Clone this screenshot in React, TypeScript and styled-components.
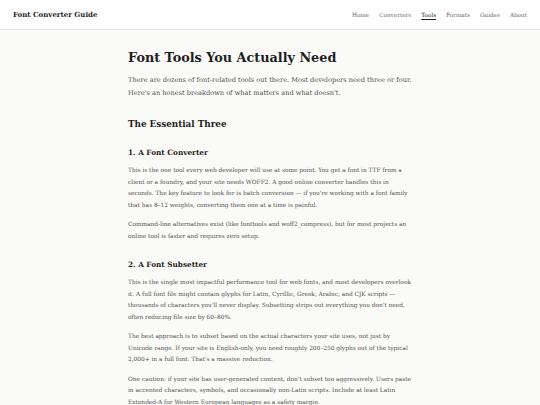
import { createGlobalStyle, styled } from "styled-components";

const GlobalStyle = createGlobalStyle`
    * { box-sizing: border-box; }
    body {
        margin: 0;
        background: #fafaf8;
        font-family: "DejaVu Serif", "Liberation Serif", serif;
        color: #555;
    }
`;

const TopBar = styled.header`
    height: 30px;
    padding: 0 13px;
    display: flex;
    align-items: center;
    justify-content: space-between;
    background: #ffffff;
    border-bottom: 1px solid #e8e8e6;
`;

const Brand = styled.div`
    font-size: 7px;
    font-weight: 700;
    color: #1e1e1e;
`;

const NavList = styled.nav`
    display: flex;
    gap: 10px;
`;

const NavLink = styled.a<{ $active?: boolean }>`
    font-size: 5.7px;
    color: ${(p) => (p.$active ? "#222" : "#666")};
    text-decoration: ${(p) => (p.$active ? "underline" : "none")};
    text-underline-offset: 1.5px;
`;

const Main = styled.main`
    width: 284px;
    margin: 0 auto;
    padding: 20px 0 30px;
`;

const Title = styled.h1`
    margin: 0 0 8px;
    font-size: 12.8px;
    line-height: 16px;
    font-weight: 700;
    color: #1e1e1e;
`;

const Lead = styled.p`
    margin: 0;
    font-size: 6.6px;
    line-height: 13px;
    color: #505050;
`;

const SectionTitle = styled.h2`
    margin: 19px 0 0;
    font-size: 8.8px;
    line-height: 11.4px;
    font-weight: 700;
    color: #1e1e1e;
`;

const ToolTitle = styled.h3`
    margin: 18px 0 7px;
    font-size: 7.3px;
    line-height: 10px;
    font-weight: 700;
    color: #1e1e1e;
`;

const Body = styled.p`
    margin: 0 0 8px;
    font-size: 5.85px;
    line-height: 11.5px;
    color: #4f4f4f;
`;

const navItems = ["Home", "Converters", "Tools", "Formats", "Guides", "About"];

export default function App() {
    return (
        <>
            <GlobalStyle />
            <TopBar>
                <Brand>Font Converter Guide</Brand>
                <NavList>
                    {navItems.map((item) => (
                        <NavLink key={item} $active={item === "Tools"}>
                            {item}
                        </NavLink>
                    ))}
                </NavList>
            </TopBar>
            <Main>
                <Title>Font Tools You Actually Need</Title>
                <Lead>
                    There are dozens of font-related tools out there. Most developers need three or four.
                    Here's an honest breakdown of what matters and what doesn't.
                </Lead>

                <SectionTitle>The Essential Three</SectionTitle>

                <ToolTitle>1. A Font Converter</ToolTitle>
                <Body>
                    This is the one tool every web developer will use at some point. You get a font in TTF from a
                    client or a foundry, and your site needs WOFF2. A good online converter handles this in
                    seconds. The key feature to look for is batch conversion — if you're working with a font family
                    that has 8–12 weights, converting them one at a time is painful.
                </Body>
                <Body>
                    Command-line alternatives exist (like fonttools and woff2_compress), but for most projects an
                    online tool is faster and requires zero setup.
                </Body>

                <ToolTitle>2. A Font Subsetter</ToolTitle>
                <Body>
                    This is the single most impactful performance tool for web fonts, and most developers overlook
                    it. A full font file might contain glyphs for Latin, Cyrillic, Greek, Arabic, and CJK scripts —
                    thousands of characters you'll never display. Subsetting strips out everything you don't need,
                    often reducing file size by 60–80%.
                </Body>
                <Body>
                    The best approach is to subset based on the actual characters your site uses, not just by
                    Unicode range. If your site is English-only, you need roughly 200–250 glyphs out of the typical
                    2,000+ in a full font. That's a massive reduction.
                </Body>
                <Body>
                    One caution: if your site has user-generated content, don't subset too aggressively. Users paste
                    in accented characters, symbols, and occasionally non-Latin scripts. Include at least Latin
                    Extended-A for Western European languages as a safety margin.
                </Body>
            </Main>
        </>
    );
}
